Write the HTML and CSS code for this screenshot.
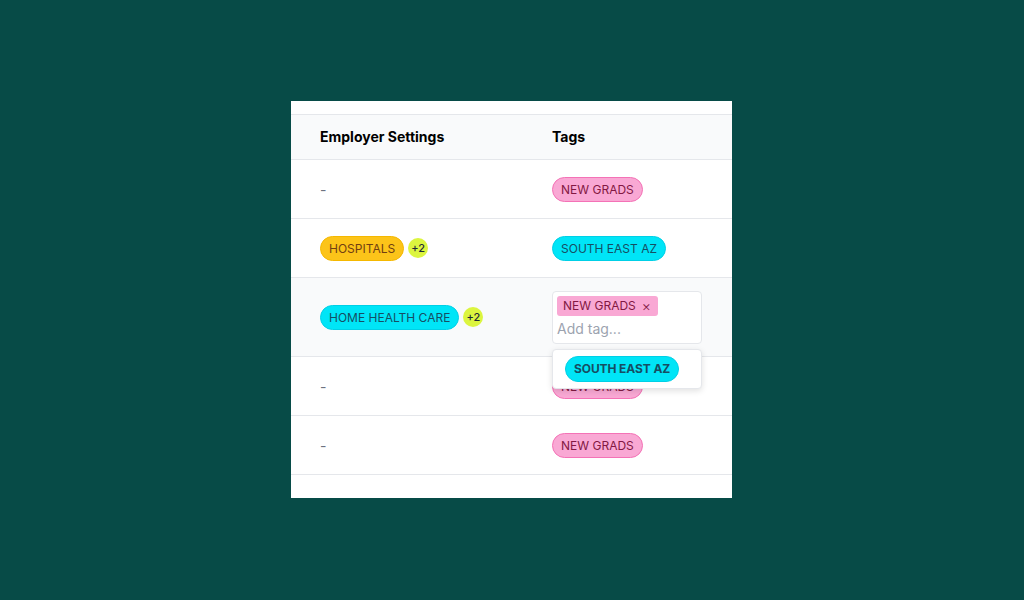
FILE: index.html
```html
<!DOCTYPE html>
<html>
<head>
<meta charset="utf-8">
<link rel="stylesheet" href="styles.css">
</head>
<body>
<div class="stage">
  <div class="card">
    <div class="table">
      <div class="row head">
        <div class="cell c1">Employer Settings</div>
        <div class="cell c2">Tags</div>
      </div>
      <div class="row">
        <div class="cell c1"><span class="dash">-</span></div>
        <div class="cell c2"><span class="pill pink">NEW GRADS</span></div>
      </div>
      <div class="row">
        <div class="cell c1"><span class="pill yellow">HOSPITALS</span><span class="more">+2</span></div>
        <div class="cell c2"><span class="pill cyan">SOUTH EAST AZ</span></div>
      </div>
      <div class="row active">
        <div class="cell c1"><span class="pill cyan">HOME HEALTH CARE</span><span class="more">+2</span></div>
        <div class="cell c2">
          <div class="editor">
            <div class="input">
              <span class="chip">NEW GRADS <span class="x">×</span></span>
              <span class="placeholder">Add tag...</span>
            </div>
            <div class="menu">
              <span class="pill cyan strong">SOUTH EAST AZ</span>
            </div>
          </div>
        </div>
      </div>
      <div class="row">
        <div class="cell c1"><span class="dash">-</span></div>
        <div class="cell c2"><span class="pill pink">NEW GRADS</span></div>
      </div>
      <div class="row">
        <div class="cell c1"><span class="dash">-</span></div>
        <div class="cell c2"><span class="pill pink">NEW GRADS</span></div>
      </div>
    </div>
  </div>
</div>
</body>
</html>
```

FILE: styles.css
```css
html, body {
  margin: 0;
  padding: 0;
}
body {
  background: #074b47;
  font-family: Inter, "Noto Sans", sans-serif;
  width: 1024px;
  height: 600px;
  overflow: hidden;
}
.stage {
  display: flex;
  justify-content: flex-start;
  padding: 101px 0 0 291px;
}
.card {
  width: 441px;
  background: #ffffff;
  padding: 13px 0 23px;
}
.table {
  border-top: 1px solid #e5e7eb;
}
.row {
  display: grid;
  grid-template-columns: 261px 1fr;
  height: 58px;
  border-bottom: 1px solid #e5e7eb;
  align-items: center;
}
.row.head {
  height: 43px;
  padding-bottom: 1px;
  background: #f9fafb;
  font-weight: 700;
  font-size: 14px;
  color: #000000;
  line-height: 16px;
}
.row.active {
  height: 78px;
  background: #f9fafb;
}
.cell {
  display: flex;
  align-items: center;
}
.c1 {
  padding-left: 29px;
}
.dash {
  color: #6b7280;
  font-size: 14px;
}
.pill {
  display: inline-flex;
  align-items: center;
  height: 25px;
  box-sizing: border-box;
  padding: 0 8px;
  border-radius: 13px;
  font-size: 12px;
  border: 1px solid transparent;
}
.pink {
  background: #f9a8d4;
  border-color: #f472b6;
  color: #831843;
}
.yellow {
  background: #fcc419;
  border-color: #f5b800;
  color: #713f12;
}
.cyan {
  background: #00e5f7;
  border-color: #00d0e6;
  color: #164e63;
}
.more {
  display: inline-flex;
  align-items: center;
  justify-content: center;
  width: 20px;
  height: 20px;
  margin-left: 4px;
  border-radius: 50%;
  background: #dcf53f;
  color: #1f2937;
  font-size: 11px;
  font-weight: 500;
}
.editor {
  position: relative;
  width: 150px;
}
.input {
  box-sizing: border-box;
  height: 53px;
  background: #ffffff;
  border: 1px solid #e5e7eb;
  border-radius: 4px;
  padding: 4px 4px 0 4px;
  display: flex;
  flex-direction: column;
  align-items: flex-start;
  gap: 3px;
}
.chip {
  display: inline-flex;
  align-items: center;
  height: 20px;
  padding: 0 7px 0 6px;
  border-radius: 3px;
  background: #f9a8d4;
  color: #831843;
  font-size: 12px;
}
.chip .x {
  margin-left: 6px;
  font-size: 14px;
  line-height: 1;
  font-weight: 300;
}
.placeholder {
  color: #9ca3af;
  font-size: 14px;
  line-height: 20px;
}
.menu {
  position: absolute;
  top: 58px;
  left: 0;
  width: 150px;
  height: 40px;
  box-sizing: border-box;
  background: #ffffff;
  border: 1px solid #e5e7eb;
  border-radius: 4px;
  box-shadow: 0 2px 6px rgba(0,0,0,0.12);
  padding: 6px 0 0 12px;
}
.pill.strong {
  height: 26px;
  padding: 0 8px;
  font-weight: 700;
  font-size: 12px;
  letter-spacing: -0.1px;
}
```
